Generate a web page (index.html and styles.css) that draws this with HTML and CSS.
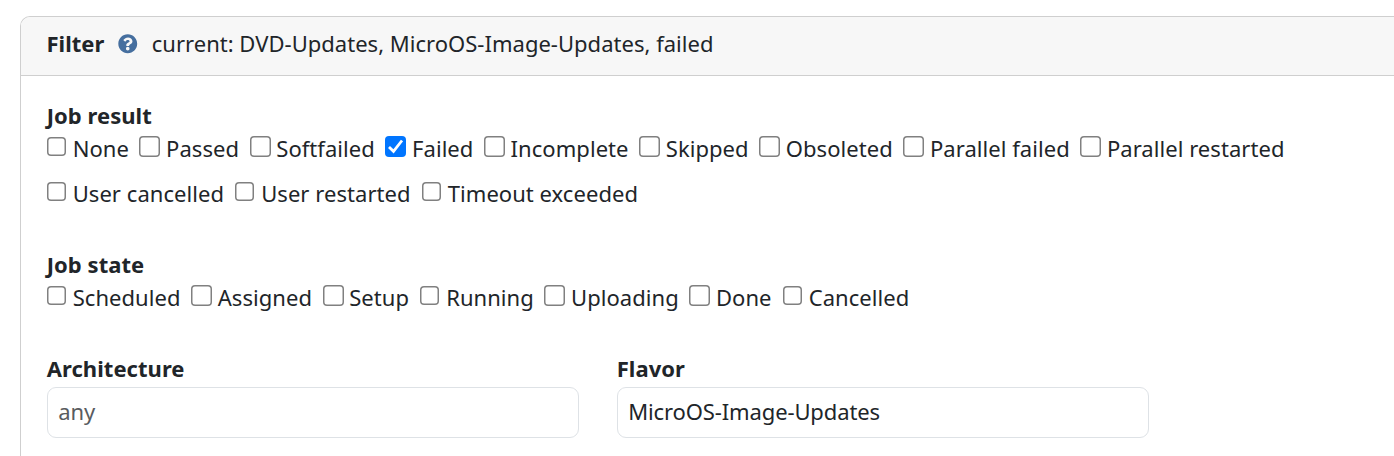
FILE: index.html
```html
<!DOCTYPE html>
<html lang="en">
<head>
    <meta charset="UTF-8">
    <meta name="viewport" content="width=device-width, initial-scale=1.0">
    <title>Test result overview</title>
    <link rel="stylesheet" href="styles.css">
</head>
<body>
    <div class="card">
        <div class="card-header">
            <strong>Filter</strong>
            <svg class="help" viewBox="0 0 512 512"><path fill="#466f9f" d="M504 256c0 137-111 248-248 248S8 393 8 256 119 8 256 8s248 111 248 248zM262.700 90c-54.500 0-89.300 23-116.500 63.800-3.500 5.300-2.400 12.400 2.700 16.300l34.700 26.300c5.200 3.900 12.600 3 16.700-2.100 17.900-22.700 30.100-35.800 57.300-35.800 20.400 0 45.700 13.100 45.700 33 0 15-12.400 22.700-32.500 34C247.100 238.500 216 254.900 216 296v4c0 6.600 5.400 12 12 12h56c6.600 0 12-5.400 12-12v-1.300c0-28.500 83.200-29.600 83.200-106.700 0-58-60.200-102-116.500-102zM256 338c-25.400 0-46 20.600-46 46s20.600 46 46 46 46-20.600 46-46-20.600-46-46-46z"/></svg>
            <span>current: DVD-Updates, MicroOS-Image-Updates, failed</span>
        </div>
        <form class="card-body">
            <div class="group">
                <strong>Job result</strong>
                <div class="checks">
                    <label><input type="checkbox" class="small">None</label>
                    <label><input type="checkbox">Passed</label>
                    <label><input type="checkbox">Softfailed</label>
                    <label><input type="checkbox" checked>Failed</label>
                    <label><input type="checkbox">Incomplete</label>
                    <label><input type="checkbox">Skipped</label>
                    <label><input type="checkbox">Obsoleted</label>
                    <label><input type="checkbox">Parallel failed</label>
                    <label><input type="checkbox">Parallel restarted</label>
                    <label><input type="checkbox" class="small">User cancelled</label>
                    <label><input type="checkbox" class="small">User restarted</label>
                    <label><input type="checkbox" class="small">Timeout exceeded</label>
                </div>
            </div>
            <div class="group">
                <strong>Job state</strong>
                <div class="checks">
                    <label><input type="checkbox" class="small">Scheduled</label>
                    <label><input type="checkbox">Assigned</label>
                    <label><input type="checkbox">Setup</label>
                    <label><input type="checkbox" class="small">Running</label>
                    <label><input type="checkbox">Uploading</label>
                    <label><input type="checkbox">Done</label>
                    <label><input type="checkbox" class="small">Cancelled</label>
                </div>
            </div>
            <div class="fields">
                <div class="field">
                    <strong>Architecture</strong>
                    <input type="text" placeholder="any">
                </div>
                <div class="field">
                    <strong>Flavor</strong>
                    <input type="text" placeholder="any" value="MicroOS-Image-Updates">
                </div>
            </div>
        </form>
    </div>
</body>
</html>
```

FILE: styles.css
```css
* {
    box-sizing: border-box;
}

body {
    margin: 0;
    padding: 16px 0 0 20px;
    background-color: #fff;
    color: #212529;
    font-family: 'Noto Sans', sans-serif;
    font-size: 22px;
    line-height: 33px;
}

.card {
    height: 440px;
    border: 1px solid #cfcfcf;
    border-right: none;
    border-bottom: none;
    border-radius: 10px 0 0 0;
    overflow: hidden;
}

.card-header {
    display: flex;
    align-items: center;
    height: 59px;
    padding: 0 25.5px 6px;
    background-color: #f7f7f7;
    border-bottom: 1px solid #cfcfcf;
}

.card-header span {
    letter-spacing: 0.02px;
}

.help {
    width: 19.5px;
    height: 19.5px;
    margin: 2px 14px 0;
}

.card-body {
    padding: 22.5px 0 0 25.7px;
}

.group {
    margin-bottom: 38px;
}

.group strong,
.field strong {
    display: block;
}

.group strong,
.field strong,
.checks {
    letter-spacing: 0.05px;
}

.checks {
    display: flex;
    flex-wrap: wrap;
    width: 1300px;
    column-gap: 11.2px;
    row-gap: 12px;
}

.checks label {
    display: flex;
    white-space: nowrap;
}

input[type="checkbox"] {
    appearance: none;
    width: 21px;
    height: 21px;
    margin: 4.5px 5.7px 0 -0.7px;
    border-radius: 4px;
    background-color: #fff;
    box-shadow: inset 0 0 0 1.5px #808080;
}

input[type="checkbox"].small {
    width: 19px;
    height: 19px;
    margin: 5.5px 7.1px 0 -0.1px;
}

input[type="checkbox"]:checked {
    box-shadow: none;
    background: #0075ff url('data:image/svg+xml;charset=UTF-8,%3csvg xmlns=%27http://www.w3.org/2000/svg%27 viewBox=%270 0 21 21%27 fill=%27none%27 stroke=%27%23ffffff%27 stroke-width=%272.800%27%3e%3cpath d=%27M4 11l4.500 4.300L17 4.500%27/%3e%3c/svg%3e') center / 21px 21px;
}

.fields {
    display: flex;
    gap: 38px;
}

.field {
    width: 532px;
}

.field strong {
    margin-bottom: 2px;
}

input[type="text"] {
    display: block;
    width: 100%;
    height: 51px;
    padding: 0 10.5px 2px;
    border: 1px solid #dee2e6;
    border-radius: 9px;
    color: #212529;
    font: inherit;
    letter-spacing: -0.12px;
}

input[type="text"]::placeholder {
    color: #595c5f;
}
```
